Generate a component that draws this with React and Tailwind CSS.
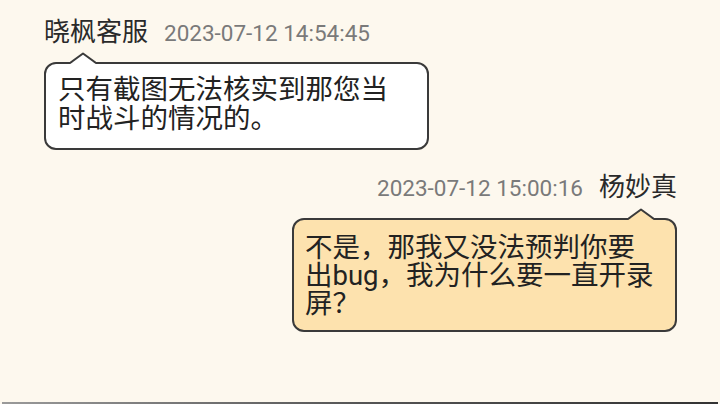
import React from 'react'

const font = { fontFamily: 'Roboto, "Noto Sans CJK SC", sans-serif' }

function Tail({ fill, className }) {
  return (
    <svg className={`absolute top-[-12px] ${className}`} width="26" height="12" viewBox="0 0 26 12">
      <polygon points="0,12 13,1.5 26,12" fill={fill} />
      <polyline points="0,11 13,1.5 26,11" fill="none" stroke="#3a3a3a" strokeWidth="2" strokeLinejoin="round" />
    </svg>
  )
}

export default function App() {
  return (
    <div className="w-[720px] h-[404px] bg-[#fdf8ee] flex flex-col overflow-hidden" style={font}>
      <div className="flex-1 flex flex-col">
        {/* incoming */}
        <div className="pl-[44px] pt-[17px] flex items-baseline gap-[16px] h-[46px]">
          <span className="text-[26px] leading-[30px] text-[#2a2a2a]">晓枫客服</span>
          <span className="text-[22.5px] leading-[30px] text-[#7a7a7a]">2023-07-12 14:54:45</span>
        </div>
        <div className="ml-[44px] mt-[16px] w-[385px] relative bg-white border-2 border-[#3a3a3a] rounded-[12px] pl-[12px] pt-[11px] pb-[15px] text-[27.5px] leading-[29px] text-[#222]">
          <Tail fill="#ffffff" className="left-[24px]" />
          <p>只有截图无法核实到那您当</p>
          <p>时战斗的情况的。</p>
        </div>

        {/* outgoing */}
        <div className="mt-[22px] pr-[43px] flex justify-end items-baseline gap-[16px] h-[30px]">
          <span className="text-[22.5px] leading-[30px] text-[#7a7a7a]">2023-07-12 15:00:16</span>
          <span className="text-[26px] leading-[30px] text-[#2a2a2a]">杨妙真</span>
        </div>
        <div className="self-end mr-[43px] mt-[16px] w-[385px] relative bg-[#fde2ae] border-2 border-[#3a3a3a] rounded-[12px] pl-[11px] pt-[14px] pb-[12px] text-[27.5px] leading-[28px] text-[#222]">
          <Tail fill="#fde2ae" className="left-[334px]" />
          <p>不是，那我又没法预判你要</p>
          <p>出bug，我为什么要一直开录</p>
          <p>屏？</p>
        </div>
      </div>
      <div className="h-[2px] mx-[2px] bg-gradient-to-r from-[#9a9a9a] via-[#555] to-[#333]" />
    </div>
  )
}
